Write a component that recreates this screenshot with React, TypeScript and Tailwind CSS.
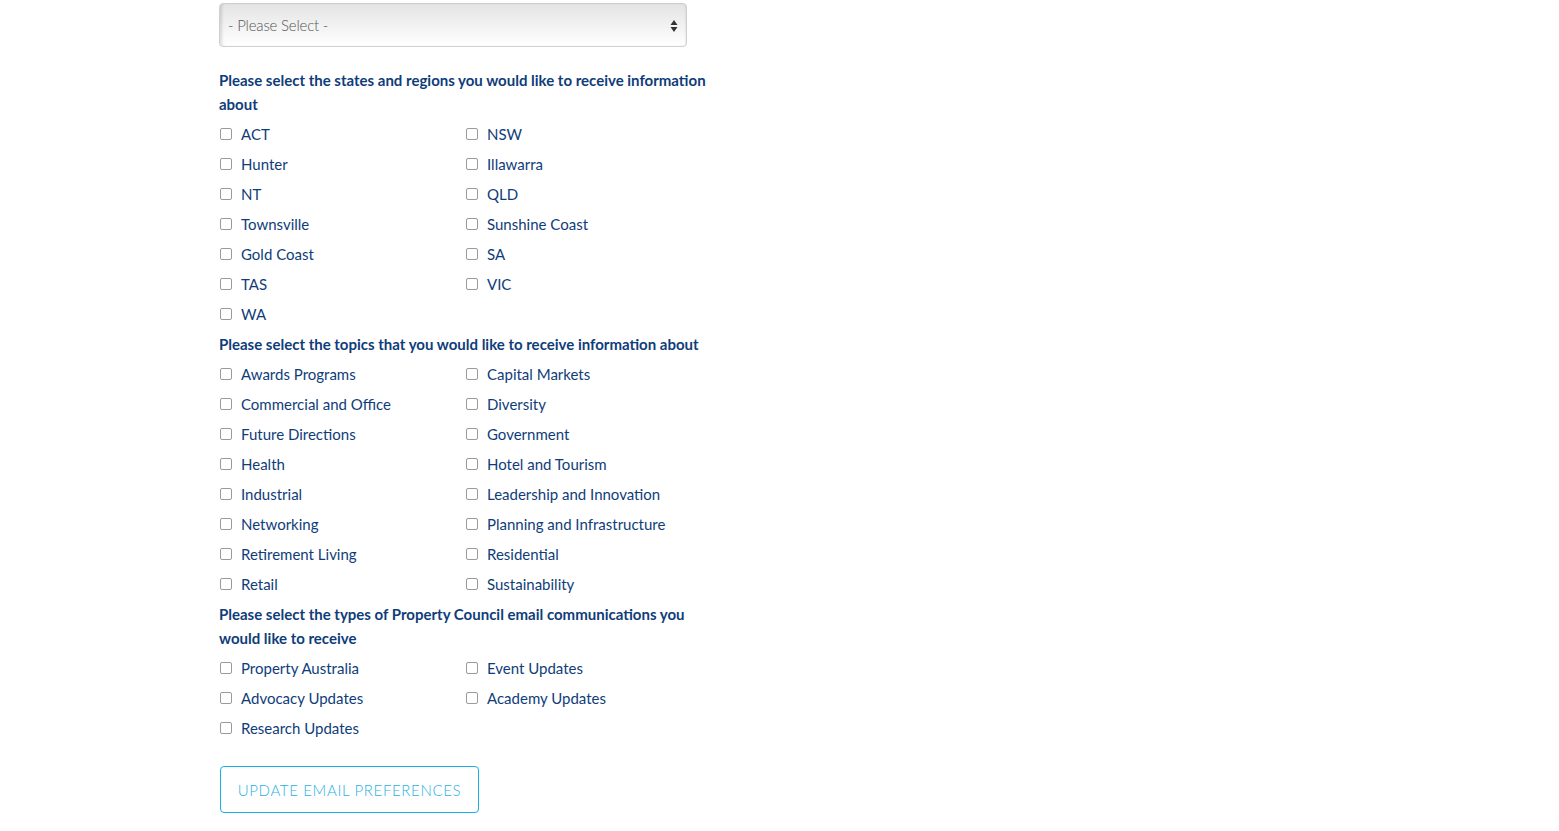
import React from "react";

const regions = [
  ["ACT", "NSW"],
  ["Hunter", "Illawarra"],
  ["NT", "QLD"],
  ["Townsville", "Sunshine Coast"],
  ["Gold Coast", "SA"],
  ["TAS", "VIC"],
  ["WA"],
];

const topics = [
  ["Awards Programs", "Capital Markets"],
  ["Commercial and Office", "Diversity"],
  ["Future Directions", "Government"],
  ["Health", "Hotel and Tourism"],
  ["Industrial", "Leadership and Innovation"],
  ["Networking", "Planning and Infrastructure"],
  ["Retirement Living", "Residential"],
  ["Retail", "Sustainability"],
];

const comms = [
  ["Property Australia", "Event Updates"],
  ["Advocacy Updates", "Academy Updates"],
  ["Research Updates"],
];

function Check({ label }: { label: string }) {
  return (
    <label className="flex items-center h-[30px] text-[15px] text-[#0f3d7a]">
      <input
        type="checkbox"
        className="m-0 ml-[1px] w-[12px] h-[12px] appearance-none border border-[#9a9a9a] rounded-[2px] bg-white shrink-0"
      />
      <span className="ml-[9px]">{label}</span>
    </label>
  );
}

function Group({ rows }: { rows: string[][] }) {
  return (
    <div className="grid grid-cols-2 w-[492px]">
      {rows.flatMap((r, i) =>
        [0, 1].map((j) =>
          r[j] ? <Check key={`${i}-${j}`} label={r[j]} /> : <div key={`${i}-${j}`} />
        )
      )}
    </div>
  );
}

function Heading({ children }: { children: React.ReactNode }) {
  return (
    <div className="py-[3px] leading-6 text-[15px] font-bold text-[#0f3d7a]">{children}</div>
  );
}

export default function App() {
  return (
    <div
      className="min-h-[831px] bg-white pl-[219px] pt-[3px]"
      style={{ fontFamily: "Lato, 'Open Sans', sans-serif" }}
    >
      <div className="w-[492px]">
        <div className="relative w-[468px] h-[44px] rounded-[4px] border border-[#cfcfcf] bg-gradient-to-b from-[#e4e4e4] to-[#ffffff] shadow-[inset_3px_0_3px_-1px_rgba(0,0,0,0.12),inset_-2px_0_2px_-1px_rgba(0,0,0,0.06)] flex items-center pl-[8px]">
          <span className="text-[15px] font-light text-[#555] tracking-[-0.2px]">- Please Select -</span>
          <svg className="absolute right-[8px] top-[15px]" width="8" height="14" viewBox="0 0 8 14">
            <path d="M4 1 L7.5 6 L0.5 6 Z" fill="#333" />
            <path d="M4 13 L7.5 8 L0.5 8 Z" fill="#333" />
          </svg>
        </div>
        <div className="mt-[18px]">
          <Heading>
            Please select the states and regions you would like to receive information about
          </Heading>
          <Group rows={regions} />
          <Heading>Please select the topics that you would like to receive information about</Heading>
          <Group rows={topics} />
          <Heading>
            Please select the types of Property Council email communications you would like to
            receive
          </Heading>
          <Group rows={comms} />
        </div>
        <button className="ml-px mt-[23px] w-[259px] h-[47px] pt-[2px] rounded-[4px] border border-[#1aaee5] text-[15px] font-light text-[#2bb0e3] tracking-[0.65px]">
          UPDATE EMAIL PREFERENCES
        </button>
      </div>
    </div>
  );
}
